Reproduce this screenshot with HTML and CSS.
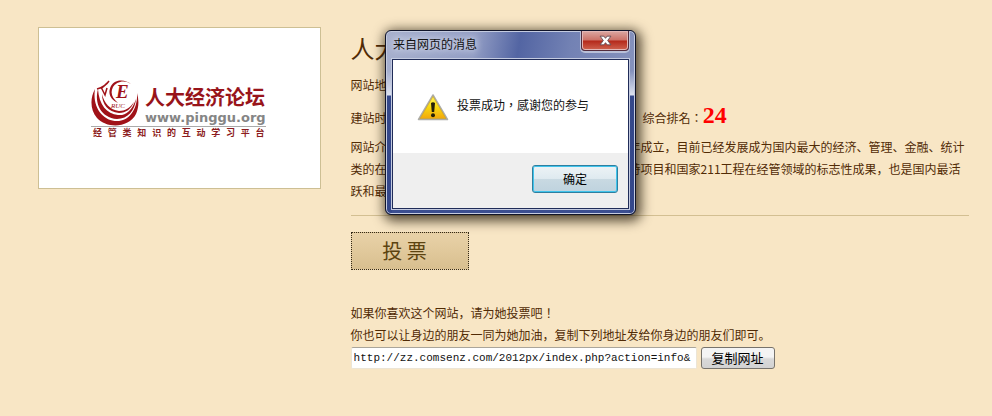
FILE: index.html
```html
<!DOCTYPE html>
<html lang="zh-CN">
<head>
<meta charset="utf-8">
<title>人大经济论坛</title>
<link rel="stylesheet" href="styles.css">
</head>
<body>
<div class="page">
  <div class="logo-card">
    <div class="logo">
      <div class="logo-top">
        <svg class="emblem" viewBox="0 0 48 46" aria-hidden="true">
          <path fill="#a01218" d="M4 9C-1 18-1 30 6 38C16 49 38 48 45 34C48 27 48 20 46 13C47 29 38 41 26 41C12 41 1 27 4 9Z"/>
          <path fill="#a01218" d="M7 9C3 23 10 38 26 39C37 39 44 30 45 19C41 31 34 36 27 35C16 34 8 25 7 9Z"/>
          <path fill="#a01218" d="M11 14C11 24 17 32 28 33C35 33 40 29 43 22C39 28 34 31 28 31C19 30 13 23 11 14Z"/>
          <path fill="#a01218" d="M40 4C34-1 24-1 20 6C16 14 20 20 27 23C21 18 19 13 22 7C25 2 33-1 40 4Z"/>
          <path fill="none" stroke="#a01218" stroke-width="1.5" d="M6 9Q14 7 18 1M10 9Q14 5 16 3M11 9L14 15L16 8"/>
          <text x="25" y="18" class="emblem-e">E</text>
          <text x="20" y="28" class="emblem-ruc">RUC</text>
        </svg>
        <div class="logo-words">
          <div class="logo-name">人大经济论坛</div>
          <div class="logo-url">www.pinggu.org</div>
        </div>
      </div>
      <div class="logo-slogan"><span>经</span><span>管</span><span>类</span><span>知</span><span>识</span><span>的</span><span>互</span><span>动</span><span>学</span><span>习</span><span>平</span><span>台</span></div>
    </div>
  </div>
  <main class="info">
    <h1>人大</h1>
    <p class="address">网站地</p>
    <p class="row rank-row"><span class="lead">建站时</span><span class="centered-marks">综合排名：<strong>24</strong></span></p>
    <div class="intro">
      <p class="row"><span class="lead">网站介</span><span>年成立，目前已经发展成为国内最大的经济、管理、金融、统计</span></p>
      <p class="row"><span class="lead">类的在</span><span>特项目和国家211工程在经管领域的标志性成果，也是国内最活</span></p>
      <p class="row"><span class="lead">跃和最</span></p>
    </div>
    <button class="vote" type="button">投 票</button>
    <p class="line">如果你喜欢这个网站，请为她投票吧<span class="centered-marks">！</span></p>
    <label class="line" for="url">你也可以让身边的朋友一同为她加油，复制下列地址发给你身边的朋友们即可。</label>
    <div class="copy">
      <input id="url" type="text" value="http://zz.comsenz.com/2012px/index.php?action=info&amp;">
      <button type="button">复制网址</button>
    </div>
  </main>
</div>

<div class="dialog" role="dialog" aria-labelledby="dialog-title">
  <div class="titlebar">
    <span id="dialog-title">来自网页的消息</span>
    <button class="close" type="button" aria-label="关闭">
      <svg viewBox="0 0 12 10" aria-hidden="true"><path d="M1 1H4.500L6 3L7.500 1H11L8 5L11 9H7.500L6 7L4.500 9H1L4 5Z" fill="#fff" stroke="#5b4650" stroke-width=".8"/></svg>
    </button>
  </div>
  <div class="pane">
    <div class="message">
      <svg class="warning" viewBox="0 0 32 28" aria-hidden="true">
        <defs><linearGradient id="gold" x1="0" y1="0" x2="0" y2="1"><stop offset="0" stop-color="#fff45a"/><stop offset=".5" stop-color="#f8d80f"/><stop offset="1" stop-color="#f2a80c"/></linearGradient></defs>
        <path d="M16 2L30.500 26.500H1.500Z" fill="#d5d5d0" stroke="#adada8" stroke-width="1.500" stroke-linejoin="round"/>
        <path d="M16 3.500L29 25.500H3Z" fill="url(#gold)" stroke="#c99a12" stroke-width=".6" stroke-linejoin="round"/>
        <path d="M14 10Q16 8.500 18 10L17.200 19H14.800Z" fill="#252008"/><circle cx="16" cy="22.300" r="2" fill="#252008"/>
      </svg>
      <span class="centered-marks">投票成功，感谢您的参与</span>
    </div>
    <div class="actions"><button type="button">确定</button></div>
  </div>
</div>
</body>
</html>
```
FILE: styles.css
```css
* { box-sizing: border-box; }
body {
  margin: 0;
  background: #f8e6c5;
  color: #512b05;
  font: 12px/22px "Noto Sans CJK SC", sans-serif;
}
h1, p { margin: 0; }
button, input { font: inherit; margin: 0; }
.centered-marks {
  font-family: "Noto Sans CJK TC", sans-serif;
  font-feature-settings: "locl" 0;
}
.page {
  display: flex;
  align-items: flex-start;
  gap: 30px;
  padding: 27px 23px 0 38px;
}
.logo-card {
  flex: 0 0 282px;
  padding: 52px 54px 49px 52px;
  background: #fff;
  border: 1px solid #cdbf94;
}
.logo-top {
  display: flex;
  gap: 6px;
  border-bottom: 1px solid #aaa;
}
.emblem { width: 48px; height: 46px; flex: none; }
.emblem-e { font: italic bold 19px "Liberation Serif", serif; fill: #a01218; }
.emblem-ruc { font: italic 7px "Liberation Serif", serif; fill: #a01218; }
.logo-words { padding-top: 4px; }
.logo-name {
  color: #98141a;
  font-size: 20px;
  line-height: 26px;
  font-weight: 700;
  white-space: nowrap;
}
.logo-url {
  color: #858585;
  font: bold 13px/16px "DejaVu Sans", sans-serif;
  white-space: nowrap;
}
.logo-slogan {
  display: flex;
  justify-content: space-between;
  padding: 0 1px 0 2px;
  color: #8c1c20;
  font-size: 9px;
  line-height: 12px;
  font-weight: 700;
}
.info { flex: 1; min-width: 0; padding-top: 5px; }
h1 { font-size: 24px; line-height: 32px; font-weight: 400; }
.address { margin-top: 10px; }
.row { display: flex; white-space: nowrap; }
.lead { flex: 0 0 278px; }
.rank-row { line-height: 32px; margin-top: 3px; align-items: baseline; }
.rank-row .lead { flex-basis: 292px; }
.rank-row strong { color: #f00; font: bold 24px/32px "Liberation Serif", serif; }
.intro {
  margin-top: 2px;
  padding-bottom: 13px;
  border-bottom: 1px solid #d3bf92;
}
.vote {
  display: block;
  width: 118px;
  height: 38px;
  margin: 16px 0 32px;
  padding: 0 10px 0 0;
  border: 1px dotted #352a18;
  background: linear-gradient(#e9d2a8, #d8bf8f);
  color: #5c4310;
  font-size: 20px;
  line-height: 34px;
}
.line { display: block; }
.copy { display: flex; gap: 4px; margin-top: 1px; }
.copy input {
  width: 346px;
  height: 22px;
  padding: 0 2px;
  border: 1px solid #ece5d6;
  border-top-color: #aaa59a;
  border-radius: 2px;
  background: #fff;
  color: #111;
  font: 11px "Liberation Mono", monospace;
}
.copy button {
  width: 74px;
  height: 22px;
  padding: 0;
  border: 1px solid #77736c;
  border-radius: 3px;
  background: linear-gradient(#f4f4f4 45%, #d9d9d9 55%, #d2d2d2);
  color: #000;
  font-size: 13px;
  line-height: 18px;
}
.dialog {
  position: absolute;
  left: 385px;
  top: 30px;
  width: 251px;
  padding: 0 6px 5px;
  border: 1px solid #10142a;
  border-radius: 6px;
  background:
    linear-gradient(transparent 40px, #dde2ef 64px, #35488a 65px, #34478a) 0 0 / 6px 100% no-repeat,
    linear-gradient(transparent 40px, #dde2ef 64px, #35488a 65px, #34478a) 100% 0 / 6px 100% no-repeat,
    linear-gradient(100deg, #a8b1ce, #929dc4 35%, #5365a3 52%, #7382b4 72%, #8793bd) 0 0 / 100% 66px no-repeat,
    #3b4e90;
  box-shadow: inset 0 0 0 1px #c4cbe0, 2px 3px 12px 3px rgba(30, 20, 5, .75);
  color: #111;
}
.titlebar {
  display: flex;
  justify-content: space-between;
  height: 28px;
}
.titlebar span { line-height: 26px; padding-left: 1px; text-shadow: 0 0 6px #dce1f0, 0 0 8px #dce1f0; }
.close {
  display: flex;
  align-items: center;
  justify-content: center;
  width: 48px;
  height: 20px;
  padding: 0;
  border: 1px solid #532c3c;
  border-top: 0;
  border-radius: 0 0 4px 4px;
  background: linear-gradient(#dba8a3, #cc7167 48%, #b4281a 52%, #cf6350);
  box-shadow: inset 0 0 0 1px #e3b7b6, 0 1px 0 1px #b9c0d8;
}
.close svg { width: 13px; height: 11px; }
.pane {
  border: 1px solid #202c58;
  background: #fff;
  box-shadow: 0 0 0 1px #c4cbe0;
}
.message {
  display: flex;
  align-items: center;
  gap: 8px;
  height: 93px;
  padding-left: 24px;
}
.message span { padding-bottom: 4px; }
.warning { width: 32px; height: 28px; }
.actions {
  display: flex;
  justify-content: flex-end;
  padding: 12px 10px 15px;
  background: #efefef;
}
.actions button {
  width: 86px;
  height: 28px;
  padding: 0;
  border: 1px solid #2f7f9f;
  border-radius: 3px;
  background: linear-gradient(#edf3f6, #dfeaf0 48%, #c8d9e2 52%, #bfd3de);
  box-shadow: inset 0 0 0 1px #40c4ec;
  color: #000;
}
```
